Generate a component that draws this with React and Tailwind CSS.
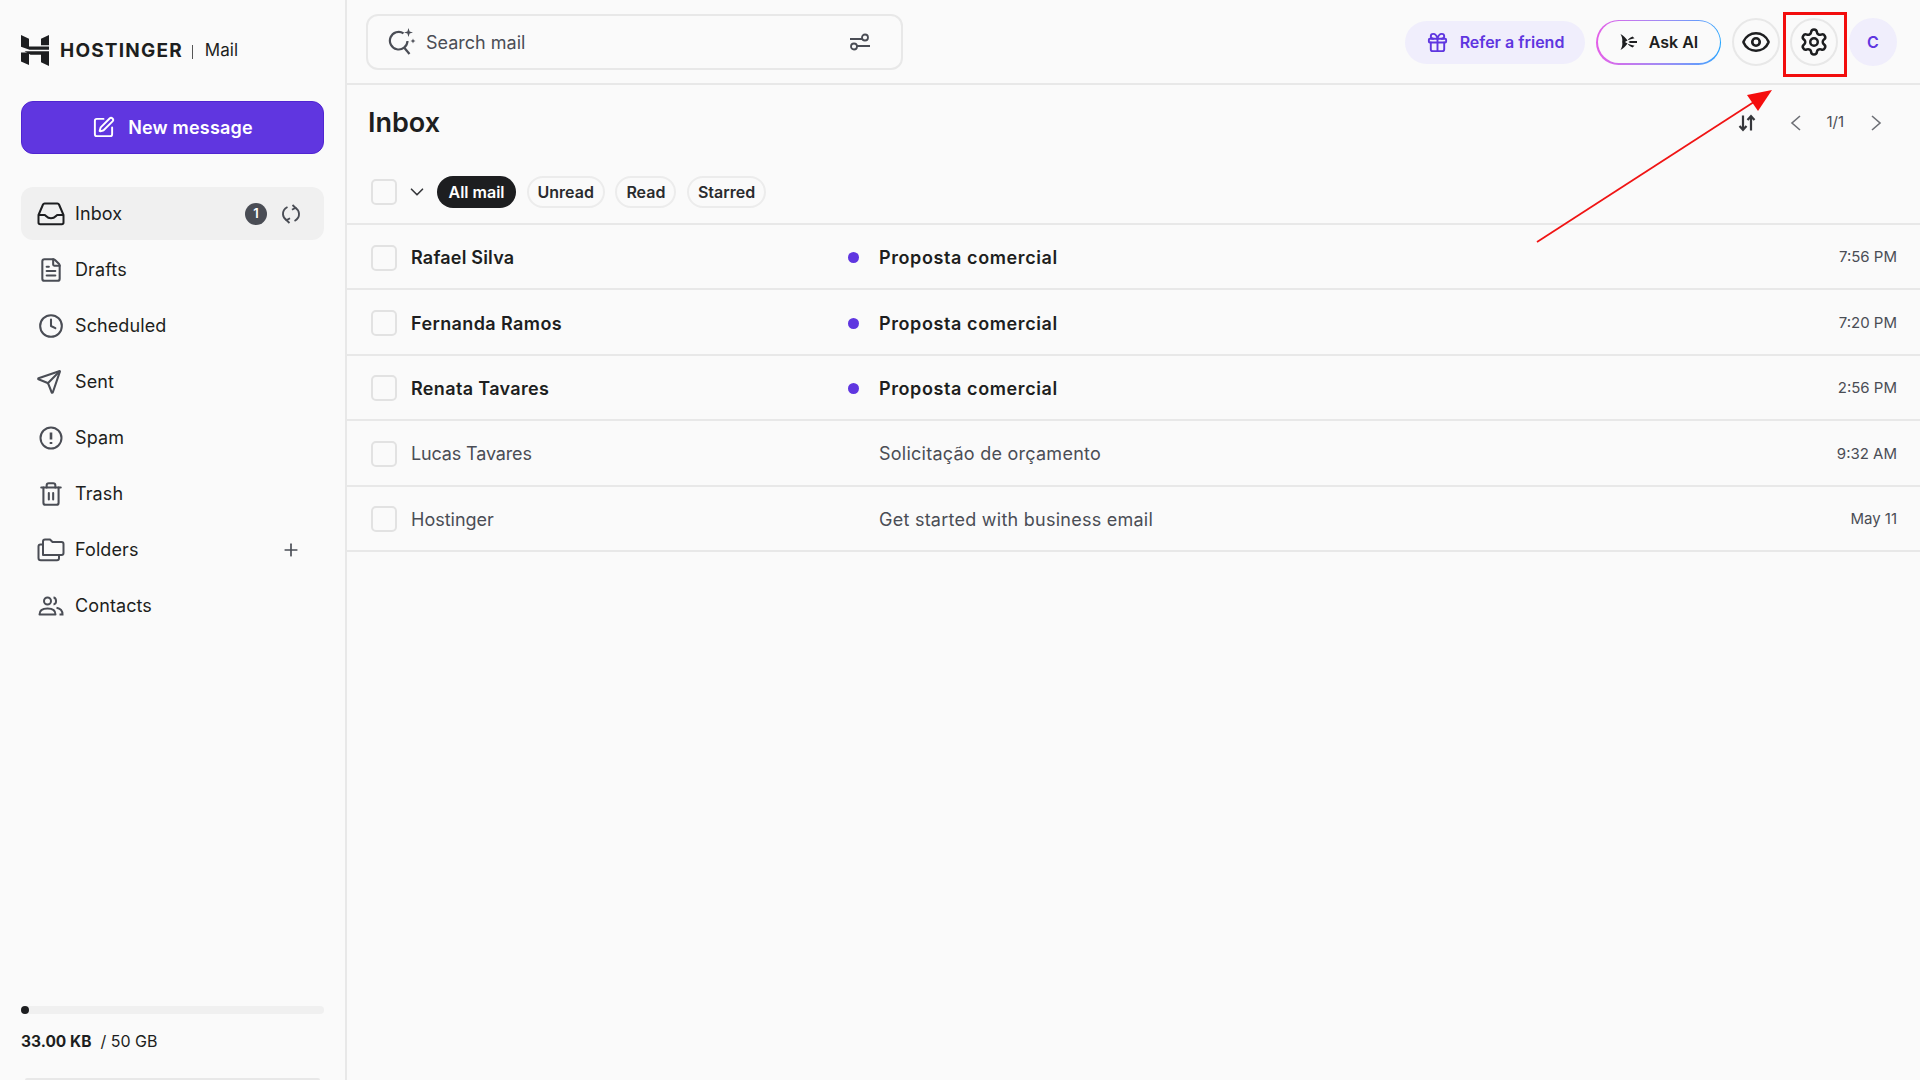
import React from 'react';
import {
  ChevronDown,
  Clock,
  Eye,
  FileText,
  Gift,
  Plus,
  Send,
  Settings,
  SquarePen,
  Trash2,
} from 'lucide-react';

const font = { fontFamily: 'Inter, sans-serif' };

function Logo() {
  return (
    <svg viewBox="0 0 28 31" className="h-[31px] w-[28px]" fill="#1d1e20">
      <path d="M0 0l8 3.800v7.700h20v3.200H8.500L0 11.800z" />
      <path d="M20 3.800L28 0v10.300h-8z" />
      <path d="M0 17.500h8V30L0 26.500z" />
      <path d="M3.500 16.300H28V31l-8-3.700v-7.500H9.500z" />
    </svg>
  );
}

function InboxIcon() {
  return (
    <svg viewBox="0 0 28 24" className="h-[24px] w-[28px]" fill="none" stroke="#1d1e20" strokeWidth="2" strokeLinejoin="round">
      <path d="M1.500 13l4.500-10.500c.3-.6.8-1 1.500-1h13c.7 0 1.200.4 1.500 1L26.500 13v7.500c0 1-.7 1.800-1.700 1.800H3.200c-1 0-1.700-.8-1.700-1.800z" />
      <path d="M1.500 13h6c1.500 0 2 3.200 6.500 3.200S19 13 20.500 13h6" />
    </svg>
  );
}

function SpamIcon() {
  return (
    <svg viewBox="0 0 24 24" className="h-[24px] w-[24px]" fill="none" stroke="#4a4d55" strokeWidth="2">
      <circle cx="12" cy="12" r="10.500" />
      <path d="M12 6.500v7M12 16v2" strokeWidth="2.600" />
    </svg>
  );
}

function FoldersIcon() {
  return (
    <svg viewBox="0 0 28 24" className="h-[24px] w-[28px]" fill="none" stroke="#4a4d55" strokeWidth="2" strokeLinejoin="round">
      <path d="M6 17V3.500C6 2.400 6.800 1.500 8 1.500h5l2.500 2.500H24.500c1.100 0 2 .9 2 2v9c0 1.100-.9 2-2 2z" />
      <path d="M6 6.500H3.500c-1.100 0-2 .9-2 2v11.500c0 1.300 1 2.300 2.300 2.300H20c1.100 0 2-.8 2-2V17" />
    </svg>
  );
}

function ContactsIcon() {
  return (
    <svg viewBox="0 0 26 20" className="h-[20px] w-[26px]" fill="none" stroke="#4a4d55" strokeWidth="2">
      <circle cx="9.500" cy="5" r="3.500" />
      <path d="M1.500 18.500c0-4 3.500-6 8-6s8 2 8 6z" strokeLinejoin="round" />
      <path d="M15.500 1.600c3 .2 3.800 6.200 0 6.800M18.500 11.800c3.500.6 6 2.700 6 6.700h-3" />
    </svg>
  );
}

function SyncIcon() {
  return (
    <svg viewBox="0 0 20 20" className="h-[20px] w-[20px]" fill="none" stroke="#4a4d55" strokeWidth="1.900">
      <path d="M6.500 3C3.500 4.500 1.800 7.500 2 10.500c.2 2.500 1.700 4.500 3.800 5.800" />
      <path d="M13.500 17c3-1.500 4.700-4.500 4.500-7.500-.2-2.500-1.700-4.500-3.800-5.800" />
      <path d="M11.500 1l3 2.800-3.500 2M8.500 19l-3-2.800 3.500-2" />
    </svg>
  );
}

function SearchAiIcon() {
  return (
    <svg viewBox="0 0 28 28" className="h-[28px] w-[28px]" fill="none" stroke="#4a4d55" strokeWidth="2.200">
      <path d="M15.500 5.300A8.800 8.800 0 1 0 19.500 13" />
      <path d="M16.500 20l5 6" />
      <path d="M20.500 0l1.100 3.400 3.400 1.100-3.400 1.100-1.100 3.400-1.100-3.400L16 4.500l3.400-1.100zM25 10.500l.7 1.800 1.800.7-1.800.7-.7 1.800-.7-1.800-1.800-.7 1.800-.7z" fill="#4a4d55" stroke="none" />
    </svg>
  );
}

function FilterIcon() {
  return (
    <svg viewBox="0 0 22 18" className="h-[18px] w-[22px]" fill="none" stroke="#4a4d55" strokeWidth="1.800">
      <circle cx="16" cy="4.500" r="3" />
      <circle cx="5" cy="13.500" r="3" />
      <path d="M1 6h12M8 13h13" />
    </svg>
  );
}

function AskAiIcon() {
  return (
    <svg viewBox="0 0 18 18" className="h-[18px] w-[18px]" fill="#1d1e20">
      <path d="M1.500 1c2.800 1.700 5 3.700 7 6.500L5.500 9.300l-2.300-.3C3.700 6.300 3 3.500 1.500 1z" />
      <path d="M1.500 17c2.800-1.700 5-3.700 7-6.500L5.500 8.700l-2.300.3c.5 2.700-.2 5.500-1.700 8z" />
      <path d="M8.500 7.300c1.500-1.800 3-3 5-3.800l2 1.800c-2.500.4-4.800 1.300-7 2z" />
      <path d="M8.500 10.700c1.500 1.800 3 3 5 3.800l2-1.800c-2.500-.4-4.800-1.300-7-2z" />
      <path d="M9.500 8h8.500v2H9.500l1.500-1z" />
    </svg>
  );
}

function SortIcon() {
  return (
    <svg viewBox="0 0 18 18" className="h-[18px] w-[18px]" fill="none" stroke="#36373b" strokeWidth="2.200">
      <path d="M5 1.500v14M1.500 12l3.500 3.800L8.500 12" />
      <path d="M13 16.500v-14M9.500 6L13 2.200 16.500 6" />
    </svg>
  );
}

function Chevron({ flip }) {
  return (
    <svg viewBox="0 0 12 16" className="h-[16px] w-[12px]" fill="none" stroke="#6d6f75" strokeWidth="1.600">
      <path d={flip ? 'M2 1l8 7-8 7' : 'M10 1L2 8l8 7'} />
    </svg>
  );
}

function NavItem({ icon, label, active, right }) {
  return (
    <div className={`flex h-[53px] items-center rounded-xl pl-4 pr-[23px] ${active ? 'bg-[#f0f0f0]' : ''}`}>
      <span className="flex w-[28px] items-center justify-center text-[#4a4d55]">{icon}</span>
      <span className="ml-[10px] text-[18px] tracking-[0.1px] text-[#1d1e20]">{label}</span>
      {right && <span className="ml-auto flex items-center">{right}</span>}
    </div>
  );
}

function Sidebar() {
  return (
    <aside className="flex h-full w-[347px] shrink-0 flex-col border-r-2 border-[#e8e8e8] pl-[21px] pr-[21px]">
      <div className="mt-[35px] flex h-[31px] items-center">
        <Logo />
        <span className="ml-[11px] pt-[2px] text-[19px] font-bold tracking-[1.200px] text-[#1d1e20]">HOSTINGER</span>
        <span className="ml-[9px] mt-[2px] h-[14px] w-px bg-[#555]" />
        <span className="ml-[12px] pt-[1px] text-[17px] text-[#1d1e20]">Mail</span>
      </div>
      <button className="mt-[35px] flex h-[53px] w-full items-center justify-center gap-[13px] rounded-xl border border-[#5025d1] bg-[#6036e0] text-[18px] font-semibold tracking-[0.2px] text-white">
        <SquarePen className="h-[23px] w-[23px]" strokeWidth={2} />
        New message
      </button>
      <nav className="mt-[33px] flex flex-col gap-[3px]">
        <NavItem
          active
          icon={<InboxIcon />}
          label="Inbox"
          right={
            <>
              <span className="flex h-[22px] w-[22px] items-center justify-center rounded-full bg-[#4a4d55] text-[13px] font-semibold text-white">1</span>
              <span className="ml-[14px]"><SyncIcon /></span>
            </>
          }
        />
        <NavItem icon={<FileText className="h-[26px] w-[26px]" strokeWidth={1.900} />} label="Drafts" />
        <NavItem icon={<Clock className="h-[26px] w-[26px]" strokeWidth={1.900} />} label="Scheduled" />
        <NavItem icon={<span className="-ml-[5px] block"><Send className="h-[26px] w-[26px]" strokeWidth={1.900} /></span>} label="Sent" />
        <NavItem icon={<SpamIcon />} label="Spam" />
        <NavItem icon={<Trash2 className="h-[26px] w-[26px]" strokeWidth={1.900} />} label="Trash" />
        <NavItem icon={<FoldersIcon />} label="Folders" right={<Plus className="h-[20px] w-[20px] text-[#4a4d55]" strokeWidth={2} />} />
        <NavItem icon={<ContactsIcon />} label="Contacts" />
      </nav>
      <div className="mt-auto">
        <div className="h-[8px] w-full rounded-full bg-[#f0f0f0]">
          <div className="h-[8px] w-[8px] rounded-full bg-[#1d1e20]" />
        </div>
        <p className="mt-[15px] text-[16px] text-[#1d1e20]">
          <span className="text-[15.500px] font-bold">33.00 KB</span>
          <span className="ml-[9px]">/ 50 GB</span>
        </p>
        <div className="mx-1 mt-[25px] h-[2px] rounded-t-xl border-t-2 border-[#e8e8e8]" />
      </div>
    </aside>
  );
}

function CircleBtn({ children }) {
  return (
    <button className="flex h-[48px] w-[48px] items-center justify-center rounded-full border-2 border-[#e8e8e8] text-[#1d1e20]">
      {children}
    </button>
  );
}

function TopBar() {
  return (
    <header className="flex h-[85px] shrink-0 items-center border-b-2 border-[#e8e8e8] pl-[19px] pr-[23px] pt-[1px]">
      <div className="flex h-[56px] w-[537px] items-center rounded-xl border-2 border-[#e8e8e8] pl-[20px] pr-[30px]">
        <SearchAiIcon />
        <span className="ml-[10px] text-[18px] text-[#4a4d55]">Search mail</span>
        <span className="ml-auto"><FilterIcon /></span>
      </div>
      <div className="ml-auto flex items-center">
        <button className="flex h-[43px] w-[180px] items-center justify-center gap-[11px] rounded-full bg-[#f0eefc] text-[16px] font-semibold text-[#5f36e0]">
          <Gift className="h-[23px] w-[23px]" strokeWidth={2} />
          Refer a friend
        </button>
        <div className="ml-[11px] h-[45px] w-[125px] rounded-full bg-gradient-to-r from-[#e35ee8] to-[#1fa4ff] p-[1.500px]">
          <div className="flex h-full w-full items-center justify-center gap-[12px] rounded-full bg-[#fafafa] text-[16px] font-semibold text-[#1d1e20]">
            <AskAiIcon />
            Ask AI
          </div>
        </div>
        <div className="ml-[11px]"><CircleBtn><Eye className="h-[30px] w-[30px]" strokeWidth={2.100} /></CircleBtn></div>
        <div className="ml-[10px]"><CircleBtn><Settings className="h-[30px] w-[30px]" strokeWidth={2} /></CircleBtn></div>
        <div className="ml-[11px] flex h-[48px] w-[48px] items-center justify-center rounded-full bg-[#f0eefc] text-[16px] font-semibold text-[#5f36e0]">C</div>
      </div>
    </header>
  );
}

function Chip({ label, active }) {
  return (
    <span className={`flex h-[32px] items-center rounded-full text-[16px] font-semibold ${active ? 'bg-[#1d1e20] px-[11.500px] text-white' : 'border-2 border-[#ececec] px-[9px] text-[#2a2b2e]'}`}>
      {label}
    </span>
  );
}

function Checkbox() {
  return <span className="block h-[26px] w-[26px] shrink-0 rounded-[5px] border-2 border-[#e2e2e2]" />;
}

const rows = [
  { from: 'Rafael Silva', subject: 'Proposta comercial', time: '7:56 PM', unread: true, fromClass: 'tracking-[0.2px]' },
  { from: 'Fernanda Ramos', subject: 'Proposta comercial', time: '7:20 PM', unread: true, fromClass: 'tracking-[0.4px]' },
  { from: 'Renata Tavares', subject: 'Proposta comercial', time: '2:56 PM', unread: true, fromClass: 'tracking-[0.35px]' },
  { from: 'Lucas Tavares', subject: 'Solicitação de orçamento', time: '9:32 AM', fromClass: 'tracking-[-0.15px]' },
  { from: 'Hostinger', subject: 'Get started with business email', time: 'May 11', fromClass: '' },
];

function Row({ from, subject, time, unread, fromClass }) {
  return (
    <div className="flex h-[65.400px] items-center border-b-2 border-[#e8e8e8] pl-[24px] pr-[23px] pt-[2px]">
      <Checkbox />
      <span className={`ml-[14px] w-[437px] text-[18px] ${fromClass} ${unread ? 'font-semibold text-[#1d1e20]' : 'text-[#4a4d55]'}`}>{from}</span>
      <span className="flex w-[31px] items-center">
        {unread && <span className="h-[11px] w-[11px] rounded-full bg-[#5f36e0]" />}
      </span>
      <span className={`text-[18px] ${unread ? 'font-semibold tracking-[0.6px] text-[#1d1e20]' : 'tracking-[0.25px] text-[#4a4d55]'}`}>{subject}</span>
      <span className="ml-auto text-[15px] text-[#4a4d55]">{time}</span>
    </div>
  );
}

function Annotation() {
  return (
    <>
      <div className="absolute left-[1783px] top-[12px] h-[65px] w-[64px] border-[3.500px] border-[#f20d0d]" />
      <svg className="absolute left-0 top-0 h-[1080px] w-[1920px]" viewBox="0 0 1920 1080" fill="none">
        <path d="M1537 242L1757 100" stroke="#f01414" strokeWidth="1.800" />
        <path d="M1772 90l-25 5 11 16z" fill="#f50d0d" />
      </svg>
    </>
  );
}

export default function App() {
  return (
    <div className="relative flex h-screen w-full overflow-hidden bg-[#fafafa]" style={font}>
      <Sidebar />
      <main className="flex min-w-0 flex-1 flex-col">
        <TopBar />
        <div className="flex h-[77px] shrink-0 items-center pl-[21px] pr-[38px]">
          <h1 className="text-[27px] font-semibold text-[#1d1e20]">Inbox</h1>
          <div className="mb-[2px] ml-auto flex items-center">
            <SortIcon />
            <span className="ml-[34px]"><Chevron /></span>
            <span className="ml-[24px] text-[15px] text-[#4a4d55]">1/1</span>
            <span className="ml-[26px]"><Chevron flip /></span>
          </div>
        </div>
        <div className="flex h-[63px] shrink-0 items-center border-b-2 border-[#e8e8e8] pb-[2px] pl-[24px]">
          <Checkbox />
          <ChevronDown className="ml-[9px] h-[22px] w-[22px] text-[#36373b]" strokeWidth={1.800} />
          <div className="ml-[9px] flex items-center gap-[10.500px]">
            <Chip active label="All mail" />
            <Chip label="Unread" />
            <Chip label="Read" />
            <Chip label="Starred" />
          </div>
        </div>
        {rows.map((row) => (
          <Row key={row.from} {...row} />
        ))}
      </main>
      <Annotation />
    </div>
  );
}
